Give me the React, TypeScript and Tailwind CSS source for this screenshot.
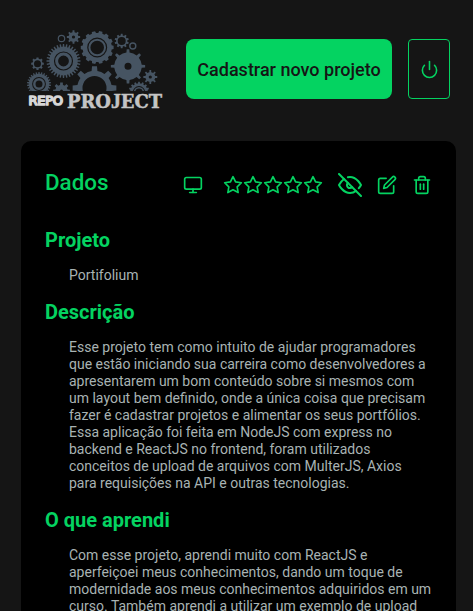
import { FiEdit, FiEyeOff, FiMonitor, FiPower, FiStar, FiTrash2 } from "react-icons/fi";

type GearProps = { x: number; y: number; r: number; root: number; hole: number; n: number; duty?: number; rot?: number };

function gearPath({ x, y, r, root, hole, n, duty = 0.5, rot = 0 }: GearProps) {
  const pts: string[] = [];
  const step = (Math.PI * 2) / n;
  const at = (rad: number, a: number) => `${(x + rad * Math.cos(a)).toFixed(2)} ${(y + rad * Math.sin(a)).toFixed(2)}`;
  for (let i = 0; i < n; i++) {
    const a = i * step + rot - Math.PI / 2;
    const h = (step * duty) / 2;
    pts.push(at(root, a - h * 1.2), at(r, a - h * 0.8), at(r, a + h * 0.8), at(root, a + h * 1.2));
    pts.push(at(root, a + step / 2));
  }
  const circle = `M${x - hole} ${y}a${hole} ${hole} 0 1 0 ${hole * 2} 0a${hole} ${hole} 0 1 0 ${-hole * 2} 0Z`;
  return `M${pts.join("L")}Z${circle}`;
}

function Gear(props: GearProps) {
  return <path fillRule="evenodd" d={gearPath(props)} />;
}

function Logo() {
  return (
    <svg className="block h-[90px] w-[142px]" viewBox="26 29 142 90" role="img" aria-label="Repo Project">
      <defs>
        <clipPath id="horizon">
          <rect x="26" y="29" width="138" height="62" />
        </clipPath>
      </defs>
      <g fill="#465462" clipPath="url(#horizon)">
        <Gear x={63.5} y={61} r={17} root={14.2} hole={9.6} n={32} />
        <circle cx={63.5} cy={61} r={6.9} fill="none" stroke="#465462" strokeWidth={3} />
        <Gear x={97.2} y={47.5} r={16.5} root={14.6} hole={10} n={14} duty={0.55} rot={0.22} />
        <circle cx={97.2} cy={47.5} r={7.8} fill="none" stroke="#465462" strokeWidth={2} />
        <Gear x={128} y={66.3} r={17.2} root={13.8} hole={3.5} n={8} duty={0.24} />
        <Gear x={94.5} y={88} r={22} root={17.3} hole={12} n={8} duty={0.36} />
        <Gear x={39} y={84} r={12} root={10.2} hole={6.9} n={26} />
        <circle cx={39} cy={84} r={4.7} fill="none" stroke="#465462" strokeWidth={2.4} />
        <Gear x={73.5} y={37} r={6.7} root={4.9} hole={1.6} n={8} duty={0.45} />
        <circle cx={61.5} cy={38.5} r={3.2} fill="none" stroke="#465462" strokeWidth={1.2} />
        <Gear x={121.7} y={41} r={7.2} root={5.6} hole={4} n={10} />
        <circle cx={132.8} cy={46} r={3} fill="none" stroke="#465462" strokeWidth={1.4} />
        <Gear x={37.5} y={63.7} r={6.4} root={5} hole={3.5} n={8} />
        <Gear x={150.3} y={77} r={7} root={4.9} hole={1.6} n={8} duty={0.4} />
        <Gear x={139} y={92.3} r={10.5} root={8.9} hole={6.2} n={16} />
        <circle cx={139} cy={92.3} r={4.5} fill="none" stroke="#465462" strokeWidth={1.5} />
        <Gear x={61.5} y={91} r={8.5} root={6.2} hole={1.5} n={8} />
      </g>
      <g fill="#d6d6d6" stroke="#d6d6d6" strokeWidth="1.7" strokeLinejoin="round">
        <text x="28.5" y="105" textLength="34.5" lengthAdjust="spacing" className="font-['DejaVu_Sans'] text-[13px]">
          REPO
        </text>
      </g>
      <g fill="#c4c4c4" stroke="#c4c4c4" strokeWidth="0.5" className="font-['DejaVu_Serif'] text-[18.5px] font-bold">
        <text x="67" y="107.5" textLength="95" lengthAdjust="spacingAndGlyphs">
          PRO
          <tspan className="font-['Liberation_Serif'] text-[20.5px]">J</tspan>
          ECT
        </text>
      </g>
    </svg>
  );
}

function Section({ title, children }: { title: string; children: string }) {
  return (
    <section className="mb-4">
      <h2 className="text-[20px] leading-[24px] font-bold text-[#04d361]">{title}</h2>
      <p className="mt-[15px] pl-6 text-[14px] leading-[17px] whitespace-pre text-[#a8b3b3]">{children}</p>
    </section>
  );
}

const description = `Esse projeto tem como intuito de ajudar programadores
que estão iniciando sua carreira como desenvolvedores a
apresentarem um bom conteúdo sobre si mesmos com
um layout bem definido, onde a única coisa que precisam
fazer é cadastrar projetos e alimentar os seus portfólios.
Essa aplicação foi feita em NodeJS com express no
backend e ReactJS no frontend, foram utilizados
conceitos de upload de arquivos com MulterJS, Axios
para requisições na API e outras tecnologias.`;

const learned = `Com esse projeto, aprendi muito com ReactJS e
aperfeiçoei meus conhecimentos, dando um toque de
modernidade aos meus conhecimentos adquiridos em um
curso. Também aprendi a utilizar um exemplo de upload`;

export default function App() {
  return (
    <div className="flex h-[611px] w-[473px] flex-col overflow-hidden bg-[#151515] font-[Roboto,sans-serif]">
      <header className="flex h-[141px] shrink-0 items-start pl-[26px]">
        <div className="mt-[29px] w-[160px]">
          <Logo />
        </div>
        <button className="mt-[39px] h-[60px] w-[206px] rounded-lg bg-[#04d361] text-[18px] font-medium whitespace-nowrap text-[#151515]">
          Cadastrar novo projeto
        </button>
        <button aria-label="Sair" className="mt-[39px] ml-4 flex h-[60px] w-[42px] items-center justify-center rounded border border-[#04d361] text-[#04d361]">
          <FiPower size={19} />
        </button>
      </header>
      <main className="ml-[21px] h-[600px] w-[435px] shrink-0 rounded-t-[10px] bg-black px-6 pt-[28px]">
        <div className="mb-[31px] flex h-[28px] items-center text-[#04d361]">
          <h1 className="mb-[2px] w-[138px] text-[22.4px] leading-[28px] font-medium">Dados</h1>
          <div className="mt-[4px] flex items-center">
            <FiMonitor size={20} />
            <div className="ml-5 flex">
              {[1, 2, 3, 4, 5].map((n) => (
                <FiStar key={n} size={20} />
              ))}
            </div>
            <FiEyeOff size={24} className="ml-[15px]" />
            <FiEdit size={20} className="ml-[15px]" />
            <FiTrash2 size={20} className="ml-[15px]" />
          </div>
        </div>
        <Section title="Projeto">Portifolium</Section>
        <Section title="Descrição">{description}</Section>
        <Section title="O que aprendi">{learned}</Section>
      </main>
    </div>
  );
}
